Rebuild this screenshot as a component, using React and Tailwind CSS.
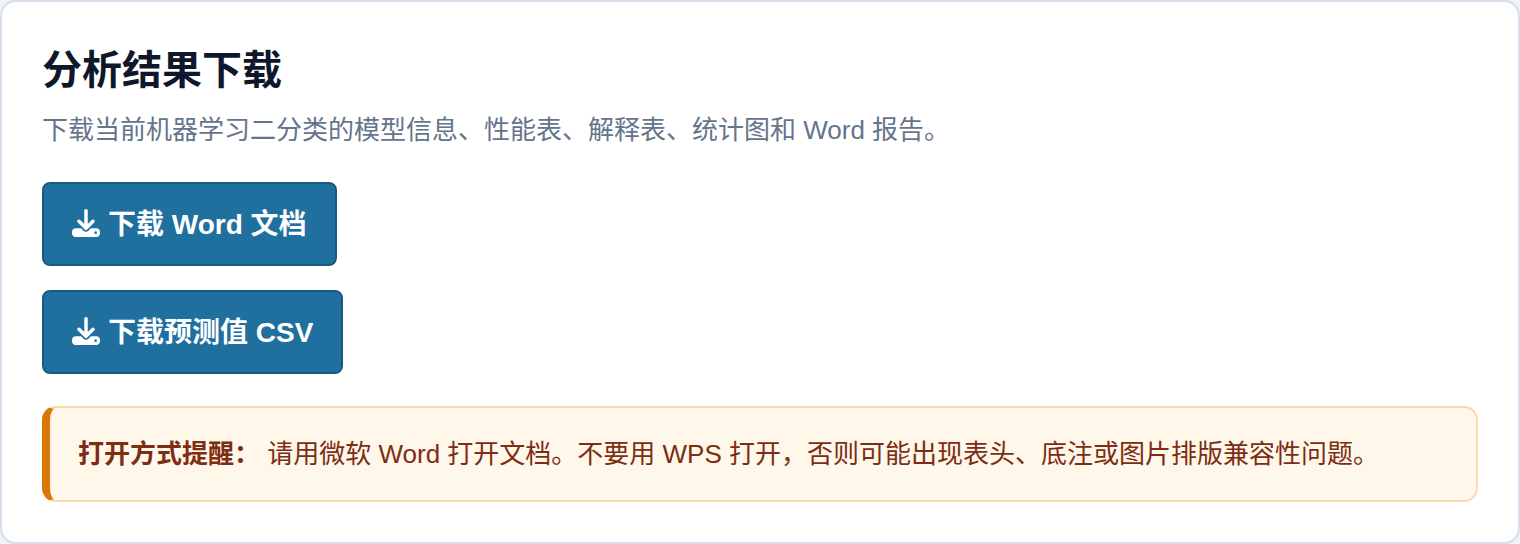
function DownloadIcon() {
  return (
    <svg viewBox="0 0 512 512" className="size-7 shrink-0" fill="currentColor" aria-hidden="true">
      <path d="M288 32c0-17.700-14.300-32-32-32s-32 14.300-32 32v242.700l-73.400-73.400c-12.500-12.500-32.800-12.500-45.300 0s-12.500 32.800 0 45.300l128 128c12.500 12.500 32.800 12.500 45.300 0l128-128c12.500-12.500 12.500-32.800 0-45.300s-32.800-12.500-45.300 0L288 274.700V32zM64 352c-35.300 0-64 28.700-64 64v32c0 35.300 28.700 64 64 64h384c35.300 0 64-28.700 64-64v-32c0-35.300-28.700-64-64-64H346.500l-45.300 45.300c-25 25-65.500 25-90.500 0L165.500 352H64zm368 56a24 24 0 1 1 0 48 24 24 0 1 1 0-48z" />
    </svg>
  );
}

function DownloadButton({ children }) {
  return (
    <button
      type="button"
      className="flex h-21 items-center gap-2 rounded-lg border-2 border-[#1a5a82] bg-[#1f6f9f] px-7 pb-0.5 text-[28px] font-bold text-white"
    >
      <DownloadIcon />
      <span className="pt-1">{children}</span>
    </button>
  );
}

export default function App() {
  return (
    <div className="bg-[#eef3f7] font-['Liberation_Sans','Noto_Sans_CJK_SC',sans-serif]">
      <section className="rounded-2xl border-2 border-[#d8deeb] bg-white p-10">
        <h2 className="text-[40px] leading-14 font-bold text-[#0f172a]">分析结果下载</h2>
        <p className="mt-2 text-[26px] leading-12 text-[#64748b]">
          下载当前机器学习二分类的模型信息、性能表、解释表、统计图和 Word 报告。
        </p>
        <div className="mt-7 flex flex-col items-start gap-6">
          <DownloadButton>下载 Word 文档</DownloadButton>
          <DownloadButton>下载预测值 CSV</DownloadButton>
        </div>
        <div className="mt-8 rounded-[14px] border-2 border-l-8 border-[#fed7aa] border-l-[#d97706] bg-[#fff7ea] px-7 py-6 text-[26px] leading-11 text-[#7c2d12]">
          <strong>打开方式提醒：</strong> 请用微软 Word 打开文档。不要用 WPS 打开，否则可能出现表头、底注或图片排版兼容性问题。
        </div>
      </section>
    </div>
  );
}
